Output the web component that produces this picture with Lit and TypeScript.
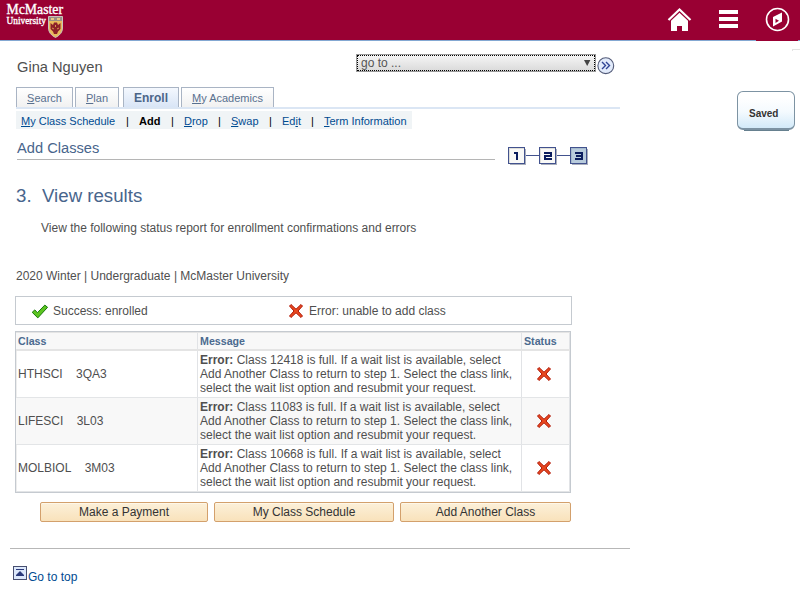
import { LitElement, html, css, svg } from "lit";
import { customElement } from "lit/decorators.js";
import { classMap } from "lit/directives/class-map.js";

const cross = html`<svg class="cross" width="16" height="16" viewBox="0 0 16 16">
  <path d="M3 1.5 8 6.2 13 1.5 14.5 3 10 8 14.5 13 13 14.5 8 9.8 3 14.5 1.5 13 6 8 1.5 3Z"
    fill="#e8481e" stroke="#b01808" stroke-width="1" stroke-linejoin="round"/></svg>`;

const check = html`<svg width="18" height="16" viewBox="0 0 18 16">
  <path d="M1.2 8.3 3.8 5.9 6.4 8.7 13.8 1.1 16.6 3.3 6.8 13.9Z" fill="#5cc420" stroke="#177a0c" stroke-width="1" stroke-linejoin="round"/></svg>`;

const rows = [
  { subject: "HTHSCI", code: "3QA3", id: "12418" },
  { subject: "LIFESCI", code: "3L03", id: "11083" },
  { subject: "MOLBIOL", code: "3M03", id: "10668" },
];

const tabs = [
  { key: "S", rest: "earch", cls: "t1" },
  { key: "P", rest: "lan", cls: "t2" },
  { key: "", rest: "Enroll", cls: "t3" },
  { key: "M", rest: "y Academics", cls: "t4" },
];

const digits: Record<number, string> = {
  1: "M6 6.5H9V13",
  2: "M5 6.5H12V9.5H6V12H13",
  3: "M5 6.5H12V12H5M6.5 9.5H12",
};

@customElement("app-root")
export class AppRoot extends LitElement {
  static styles = css`
    :host { display: block; position: relative; width: 800px; height: 600px; overflow: hidden; background: #fff;
      font-family: "Liberation Sans", Arial, sans-serif; font-size: 12px; line-height: 14px; color: #4f4f4f; }
    * { box-sizing: border-box; }
    svg { display: block; }
    .banner { height: 41px; background: #990033; border-bottom: 1px solid #84a8d2; display: flex; justify-content: space-between; }
    .banner .tools { display: flex; padding-top: 6px; }
    .tools .home { margin-right: 27px; }
    .tools .menu { margin-right: 27px; }
    .tools .nav { margin-right: 9px; }
    .under { position: absolute; left: 756px; top: 40px; width: 42px; height: 1px; background: #990033; }
    .corner { position: absolute; left: 792px; top: 49px; width: 8px; height: 2px; border-top: 1px solid #e3e3e3; border-left: 1px solid #e3e3e3; }
    .saved { position: absolute; left: 737px; top: 91px; width: 58px; height: 39px; border: 1px solid #7d93a3; border-bottom-width: 2px;
      border-radius: 6px; background: linear-gradient(#fff 15%, #f4fafe 55%, #d3eaf9); font-size: 10px; line-height: 12px; font-weight: bold; color: #333; padding: 16px 0 0 11px; }
    .saved::after { content: ""; position: absolute; left: 6px; right: 5px; bottom: -3px; height: 1px; background: #66808f; }
    .top { display: flex; height: 46px; padding-left: 17px; }
    .name { width: 339px; font-size: 14.67px; line-height: 18px; padding-top: 17px; }
    .select { margin-top: 13px; width: 240px; height: 18px; border: 1px solid #999; background: linear-gradient(#f6f6f6, #dadada);
      outline: 1px dotted #000; outline-offset: -2px; display: flex; justify-content: space-between; padding: 1px 4px 0 4px; line-height: 14px; color: #555; }
    .select svg { margin-top: 4px; }
    .go { margin: 16px 0 0 1px; }
    .tabs { display: flex; width: 604px; height: 22px; margin-left: 16px; border-bottom: 2px solid #dbe6f4; }
    .tab { height: 20px; border: 1px solid #a9b4c4; border-bottom: 0; background: linear-gradient(#fff, #f1f1f1); color: #58708f;
      font-size: 11px; line-height: 13px; padding-top: 4px; text-align: center; margin-right: 2px; }
    .t1 { width: 57px; } .t2 { width: 44px; margin-right: 4px; } .t3 { width: 56px; } .t4 { width: 93px; }
    .tab.active { background: linear-gradient(#f4f8fe, #d9e5f6); font-size: 12px; font-weight: bold; color: #4b6588; padding-top: 4px; }
    .sub { display: grid; grid-template-columns: 105px 13px 32px 13px 34px 13px 38px 13px 29px 13px 1fr; width: 396px; height: 18px; margin: 2px 0 0 16px; padding-left: 5px;
      background: #f0f4f6; font-size: 11px; line-height: 13px; padding-top: 4px; color: #004b91; white-space: nowrap; }
    .sub b, .sub i { color: #000; font-style: normal; }
    .titlebar { display: flex; height: 39px; padding-left: 17px; }
    .title { width: 478px; height: 31px; border-bottom: 1px solid #b5b5b5; font-size: 14.67px; line-height: 18px; padding-top: 10px; color: #48658c; }
    .steps { margin: 18px 0 0 13px; }
    h1 { font-size: 18.67px; line-height: 22px; font-weight: normal; margin: 17px 0 0 16px; color: #48658c; display: flex; }
    h1 span { width: 26px; }
    .intro { margin: 14px 0 0 41px; }
    .term { margin: 34px 0 0 16px; }
    .legend { display: flex; margin: 13px 0 0 15px; width: 557px; height: 29px; border: 1px solid #c5cad0; padding: 7px 0 0 15px; }
    .legend .a, .legend .b { display: flex; }
    .legend .cross { margin-top: -1px; }
    .legend .a { width: 257px; } .legend .a svg { margin-right: 4px; } .legend .b svg { margin-right: 5px; }
    .table { margin: 6px 0 0 15px; width: 556px; border: 1px solid #c5cad0; box-shadow: inset 0 0 0 1px #ededed; }
    .row { display: grid; grid-template-columns: 182px 324px 48px; height: 47px; border-bottom: 1px solid #e3e5e7; }
    .row.alt { background: #f8f8f8; }
    .row.head { height: 19px; border-bottom: 2px solid #e4e4e4; background: #f8f8f8; border-top: 1px solid #e4e4e4; font-size: 10.67px; line-height: 13px; font-weight: bold; color: #4b6a8f; }
    .row > div { border-right: 1px solid #e1e3e6; padding: 2px 0 0 2px; white-space: nowrap; }
    .row:not(.head) > .cls { padding-top: 16px; display: flex; }
    .cls span { margin-right: 13.3px; }
    .row .st { padding-left: 14px; padding-top: 15px; }
    .row.head > .st { padding: 2px 0 0 2px; }
    .buttons { display: flex; gap: 6px; margin: 9px 0 0 40px; }
    .btn { height: 20px; border: 1px solid #d3a06c; border-radius: 2px; background: linear-gradient(#fcf0d9, #f9e2bb); box-shadow: inset 0 1px #fff8e8;
      text-align: center; font-size: 12px; line-height: 14px; padding-top: 2px; color: #333; }
    .b1 { width: 168px; } .b2 { width: 180px; } .b3 { width: 171px; }
    .rule { width: 620px; height: 1px; background: #b7b7b7; margin: 26px 0 0 10px; }
    .foot { display: flex; margin: 17px 0 0 13px; color: #004b91; }
    .foot span { padding-top: 4px; margin-left: 1px; }
  `;

  private step(n: number, x: number) {
    return svg`<g transform="translate(${x} 0)">
      <path d="M17.5 2V17.5H2" fill="none" stroke="#a9aebb"/>
      <rect x="0.5" y="0.5" width="16" height="16" fill=${n === 3 ? "#b8cbdc" : "#f9f9f7"} stroke="#42528e"/>
      <path d="M1.5 16V1.5H16" fill="none" stroke=${n === 3 ? "#a5bacd" : "#deded9"}/>
      <path d=${digits[n]} transform="translate(-.5 -.5)" fill="none" stroke="#0b1d5e" stroke-width="2"/></g>`;
  }

  render() {
    return html`
      <div class="banner">
        <svg width="70" height="40" viewBox="0 0 70 40" font-family="Liberation Serif, serif" fill="#fff" stroke="#fff" stroke-width=".35">
          <text x="6.5" y="14" font-size="14.5" textLength="56.5" lengthAdjust="spacingAndGlyphs">McMaster</text>
          <text x="6.5" y="24" font-size="10.5" textLength="39.5" lengthAdjust="spacingAndGlyphs">University</text>
          <g stroke-width="1"><path d="M48.5 16.5H62.5V28Q62.5 34 55.5 37.5 48.5 34 48.5 28Z" fill="#e9b95c" stroke="#c9c4bd"/>
          <path d="M49 17H62V21H49Z" fill="#9a8f86" stroke="none"/><path d="M51 19H54M57 19H60" stroke="#e9c987" stroke-width="2"/>
          <path d="M50.5 23 53 25 54 22.5H57L58 25 60.5 23V29L58 31.5 57 34H54L53 31.5 50.5 29Z" fill="#8d1f28" stroke="none"/>
          <path d="M52 28 54 29M59 28 57 29M55.5 25V27" stroke="#d49a4b"/></g>
        </svg>
        <div class="tools">
          <svg class="home" width="25" height="28" viewBox="0 0 25 28">
            <path d="M1.5 14 12.5 3.5 23.5 14" fill="none" stroke="#fff" stroke-width="2.2"/>
            <path d="M4 14.8 12.5 6.8 21 14.8V25H15V20H10V25H4Z" fill="#fff"/>
          </svg>
          <svg class="menu" width="19" height="28" viewBox="0 0 19 28"><path d="M0 4H19V8H0ZM0 11H19V15H0ZM0 18H19V22H0Z" fill="#fff"/></svg>
          <svg class="nav" width="26" height="28" viewBox="0 0 26 28">
            <circle cx="12.5" cy="13.5" r="11" fill="none" stroke="#fff" stroke-width="1.6"/>
            <path d="M8 11 17 6.5V15.5L8 20.5Z" fill="#fff"/><path d="M10.5 12.8 14 14.8 10.5 17Z" fill="#990033"/>
          </svg>
        </div>
      </div>
      <div class="under"></div><div class="corner"></div>
      <div class="saved">Saved</div>

      <div class="top">
        <div class="name">Gina Nguyen</div>
        <div class="select"><span>go to ...</span><svg width="7" height="7" viewBox="0 0 7 7"><path d="M0 0H6.4L3.2 6Z" fill="#444"/></svg></div>
        <svg class="go" width="18" height="18" viewBox="0 0 18 18">
          <circle cx="8.8" cy="8.7" r="7.9" fill="#e2ebfb" stroke="#525a78" stroke-width="1.1"/>
          <path d="M5 5 8.5 8.5 5 12M9 5 12.5 8.5 9 12" fill="none" stroke="#2f4495" stroke-width="1.4"/>
        </svg>
      </div>
      <div class="tabs">${tabs.map(t => html`<div class="tab ${classMap({ [t.cls]: true, active: t.cls === "t3" })}"><u>${t.key}</u>${t.rest}</div>`)}</div>
      <div class="sub">
        <span><u>M</u>y Class Schedule</span><i>|</i><b>Add</b><i>|</i><span><u>D</u>rop</span><i>|</i><span><u>S</u>wap</span><i>|</i><span>Ed<u>i</u>t</span><i>|</i><span><u>T</u>erm Information</span>
      </div>
      <div class="titlebar">
        <div class="title">Add Classes</div>
        <svg class="steps" width="82" height="20" viewBox="0 0 82 20" shape-rendering="crispEdges">
          <path d="M17 8.5H31M48 8.5H62M79 8.5H80" stroke="#42528e"/>
          ${this.step(1, 0)}${this.step(2, 31)}${this.step(3, 62)}
        </svg>
      </div>
      <h1><span>3.</span>View results</h1>
      <div class="intro">View the following status report for enrollment confirmations and errors</div>
      <div class="term">2020 Winter | Undergraduate | McMaster University</div>
      <div class="legend">
        <div class="a">${check}<span>Success: enrolled</span></div>
        <div class="b">${cross}<span>Error: unable to add class</span></div>
      </div>
      <div class="table">
        <div class="row head"><div>Class</div><div>Message</div><div class="st">Status</div></div>
        ${rows.map((r, i) => html`<div class="row ${classMap({ alt: i === 1 })}">
          <div class="cls"><span>${r.subject}</span>${r.code}</div>
          <div><b>Error:</b> Class ${r.id} is full. If a wait list is available, select<br>Add Another Class to return to step 1. Select the class link,<br>select the wait list option and resubmit your request.</div>
          <div class="st">${cross}</div></div>`)}
      </div>
      <div class="buttons"><div class="btn b1">Make a Payment</div><div class="btn b2">My Class Schedule</div><div class="btn b3">Add Another Class</div></div>
      <div class="rule"></div>
      <div class="foot">
        <svg width="14" height="14" viewBox="0 0 14 14"><rect x=".5" y=".5" width="13" height="13" fill="#dce8fb" stroke="#474f70"/>
          <path d="M3 3.5H11" stroke="#2b3a7c"/><path d="M7 5 11 9V10H3V9Z" fill="#2b3a7c"/></svg>
        <span>Go to top</span>
      </div>`;
  }
}
